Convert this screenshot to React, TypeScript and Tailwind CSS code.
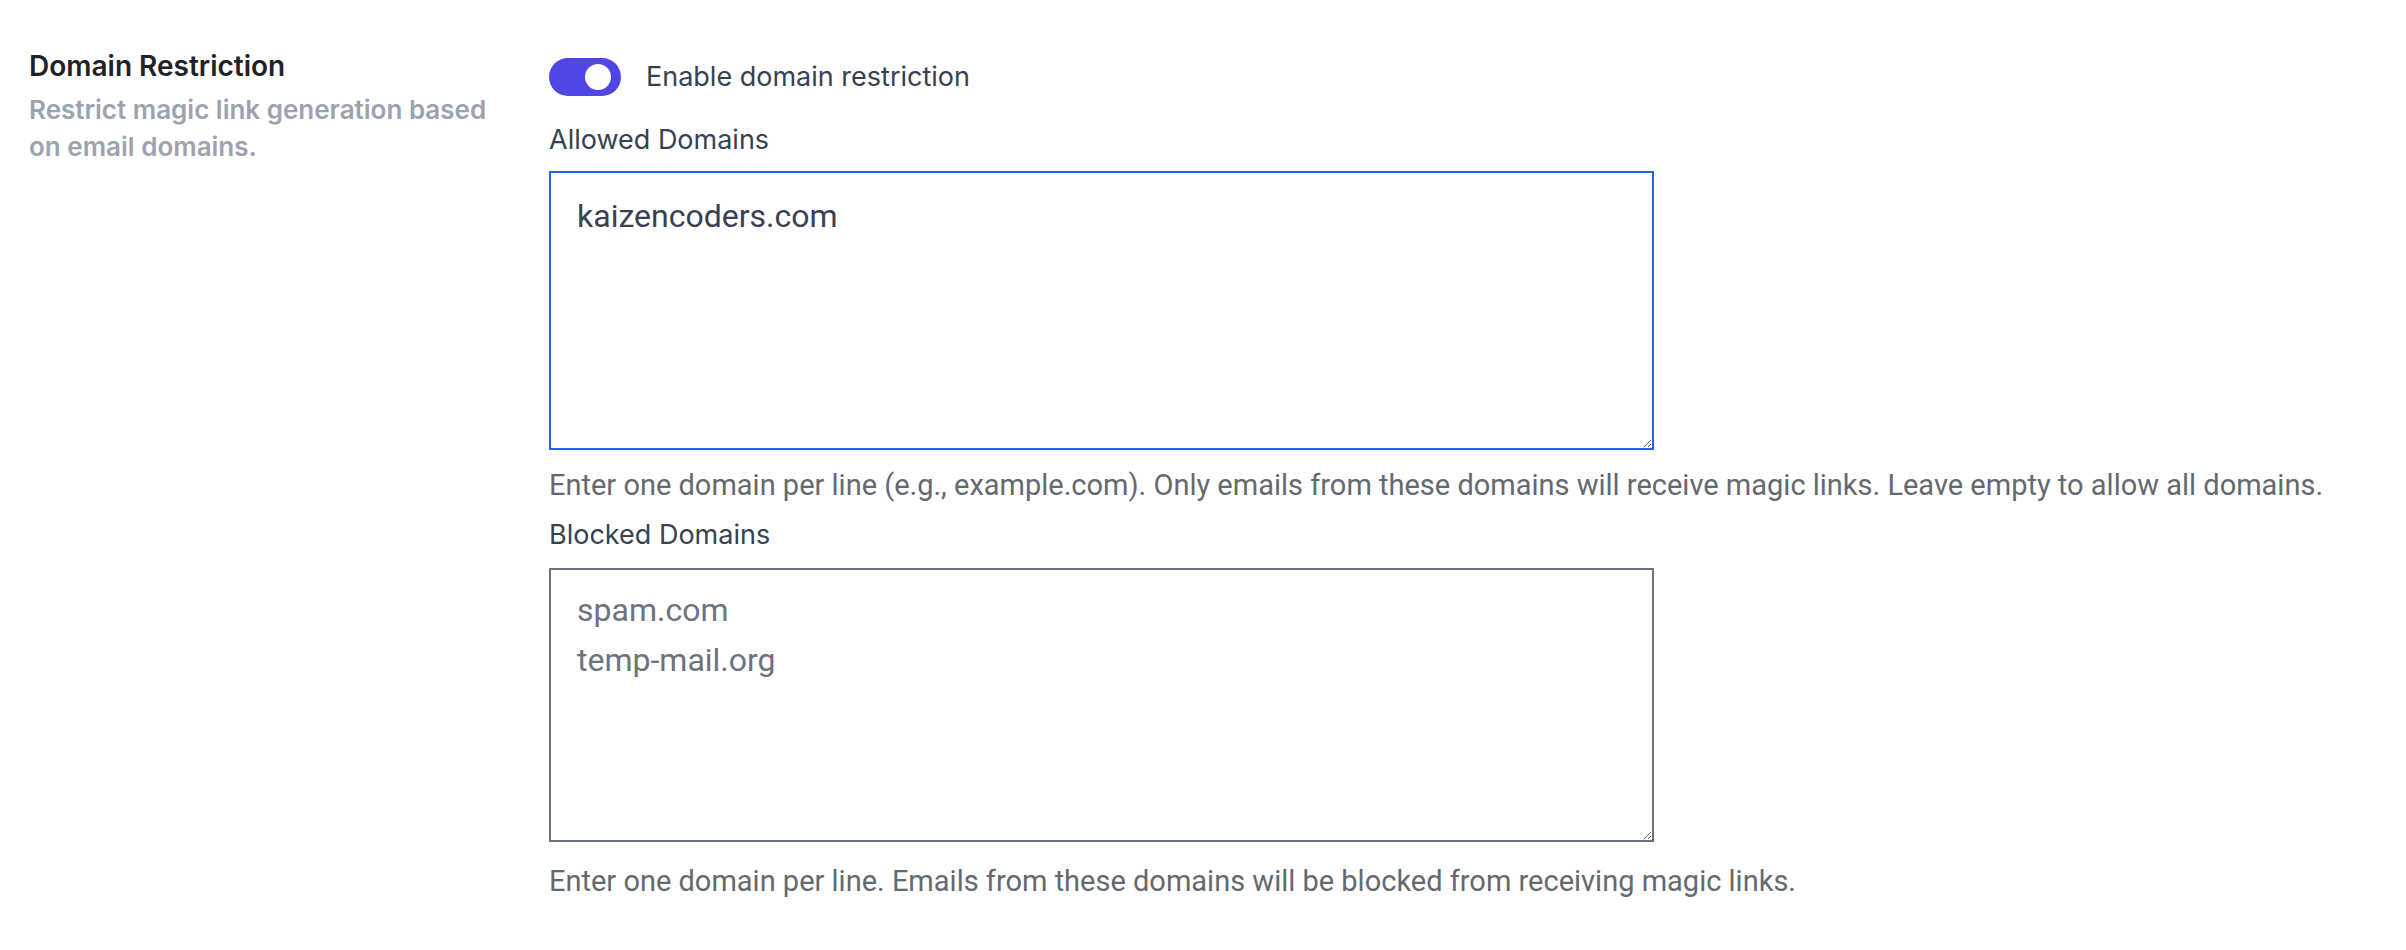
import { useState } from "react";

function Toggle({ on, onChange }: { on: boolean; onChange: () => void }) {
    return (
        <button
            type="button"
            onClick={onChange}
            className={`flex h-[38px] w-[72px] shrink-0 items-center rounded-full px-[10px] ${
                on ? "justify-end bg-[#4f46e5]" : "justify-start bg-[#d1d5db]"
            }`}
        >
            <span className="block h-[26px] w-[26px] rounded-full bg-white" />
        </button>
    );
}

function App() {
    const [enabled, setEnabled] = useState(true);
    const [allowed, setAllowed] = useState("kaizencoders.com");
    const [blocked, setBlocked] = useState("");

    return (
        <div className="min-h-screen bg-white px-[29px] pt-[46px] font-['Inter',sans-serif]">
            <div className="flex">
                {/* Left: section heading */}
                <div className="w-[520px] shrink-0 pr-[40px]">
                    <h2 className="text-[28px] font-semibold leading-[40px] text-[#1d2327]">
                        Domain Restriction
                    </h2>
                    <p className="mt-[5px] text-[26px] font-semibold leading-[37px] text-[#9ca3af]">
                        Restrict magic link generation based on email domains.
                    </p>
                </div>

                {/* Right: fields */}
                <div className="flex-1 pt-[11px]">
                    <label className="flex items-center gap-[25px]">
                        <Toggle on={enabled} onChange={() => setEnabled(!enabled)} />
                        <span className="text-[27px] leading-[40px] text-[#374151]">
                            Enable domain restriction
                        </span>
                    </label>

                    <div className="mt-[23px] text-[27px] leading-[40px] text-[#374151]">
                        Allowed Domains
                    </div>
                    <textarea
                        value={allowed}
                        onChange={(e) => setAllowed(e.target.value)}
                        className="mt-[11px] block h-[279px] w-[1105px] rounded-none border-2 border-[#2563eb] bg-white px-[26px] pt-[18px] pb-[15px] font-['Roboto',sans-serif] text-[32px] leading-[50px] text-[#374151] outline-none"
                    />
                    <p className="mt-[15px] font-['Roboto',sans-serif] text-[29px] leading-[40px] text-[#646970]">
                        Enter one domain per line (e.g., example.com). Only emails from these domains will receive magic links. Leave empty to allow all domains.
                    </p>

                    <div className="mt-[10px] text-[27px] leading-[40px] text-[#374151]">
                        Blocked Domains
                    </div>
                    <textarea
                        value={blocked}
                        onChange={(e) => setBlocked(e.target.value)}
                        placeholder={"spam.com\ntemp-mail.org"}
                        className="mt-[13px] block h-[274px] w-[1105px] rounded-none border-2 border-[#6b7280] bg-white px-[26px] py-[15px] font-['Roboto',sans-serif] text-[32px] leading-[50px] text-[#374151] outline-none placeholder:text-[#6b7280]"
                    />
                    <p className="mt-[19px] font-['Roboto',sans-serif] text-[29px] leading-[40px] text-[#646970]">
                        Enter one domain per line. Emails from these domains will be blocked from receiving magic links.
                    </p>
                </div>
            </div>
        </div>
    );
}

export default App;
